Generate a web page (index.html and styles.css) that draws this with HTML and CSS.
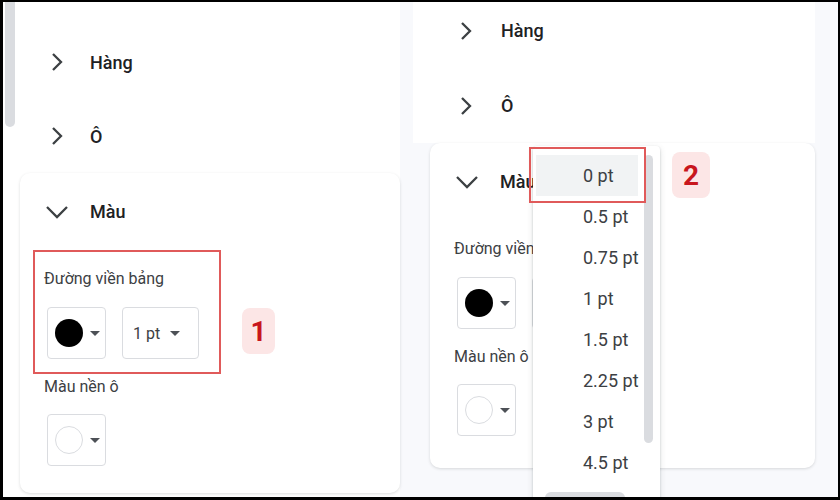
FILE: index.html
```html
<!DOCTYPE html>
<html lang="vi">
<head>
    <meta charset="UTF-8">
    <meta name="viewport" content="width=device-width, initial-scale=1.0">
    <title>Thuộc tính bảng</title>
    <link rel="stylesheet" href="styles.css">
</head>
<body>

<div class="frame">

    <!-- panel trái -->
    <div class="panel panel-left">
        <div class="scroll-thumb"></div>
        <div class="column">
            <div class="row">
                <svg class="chev" viewBox="0 0 24 24"><polyline points="8,4 16,12 8,20"/></svg>
                <span>Hàng</span>
            </div>
            <div class="row">
                <svg class="chev" viewBox="0 0 24 24"><polyline points="8,4 16,12 8,20"/></svg>
                <span>Ô</span>
            </div>

            <div class="card">
                <div class="card-head">
                    <svg class="chev" viewBox="0 0 24 24"><polyline points="2,7 12,17 22,7"/></svg>
                    <span>Màu</span>
                </div>
                <div class="annot-row">
                    <div class="field-box marked">
                        <div class="label">Đường viền bảng</div>
                        <div class="controls">
                            <div class="btn btn-color">
                                <span class="swatch"></span>
                                <svg class="caret" viewBox="0 0 10 5"><path d="M0 0h10L5 5z"/></svg>
                            </div>
                            <div class="btn btn-size">
                                <span>1 pt</span>
                                <svg class="caret" viewBox="0 0 10 5"><path d="M0 0h10L5 5z"/></svg>
                            </div>
                        </div>
                    </div>
                    <div class="badge">1</div>
                </div>
                <div class="label label-below">Màu nền ô</div>
                <div class="controls controls-below">
                    <div class="btn btn-color">
                        <span class="swatch swatch-white"></span>
                        <svg class="caret" viewBox="0 0 10 5"><path d="M0 0h10L5 5z"/></svg>
                    </div>
                </div>
            </div>
        </div>
    </div>

    <!-- panel phải -->
    <div class="panel panel-right">
        <div class="column">
            <div class="row">
                <svg class="chev" viewBox="0 0 24 24"><polyline points="8,4 16,12 8,20"/></svg>
                <span>Hàng</span>
            </div>
            <div class="row">
                <svg class="chev" viewBox="0 0 24 24"><polyline points="8,4 16,12 8,20"/></svg>
                <span>Ô</span>
            </div>

            <div class="card">
                <div class="card-head">
                    <svg class="chev" viewBox="0 0 24 24"><polyline points="2,7 12,17 22,7"/></svg>
                    <span>Màu</span>
                </div>
                <div class="annot-row">
                    <div class="field-box">
                        <div class="label">Đường viền bảng</div>
                        <div class="controls">
                            <div class="btn btn-color">
                                <span class="swatch"></span>
                                <svg class="caret" viewBox="0 0 10 5"><path d="M0 0h10L5 5z"/></svg>
                            </div>
                            <div class="btn btn-size">
                                <span>1 pt</span>
                                <svg class="caret" viewBox="0 0 10 5"><path d="M0 0h10L5 5z"/></svg>
                            </div>
                        </div>
                    </div>
                </div>
                <div class="label label-below">Màu nền ô</div>
                <div class="controls controls-below">
                    <div class="btn btn-color">
                        <span class="swatch swatch-white"></span>
                        <svg class="caret" viewBox="0 0 10 5"><path d="M0 0h10L5 5z"/></svg>
                    </div>
                </div>
            </div>
        </div>

        <div class="menu">
            <div class="menu-item active">0 pt</div>
            <div class="menu-item">0.5 pt</div>
            <div class="menu-item">0.75 pt</div>
            <div class="menu-item">1 pt</div>
            <div class="menu-item">1.5 pt</div>
            <div class="menu-item">2.25 pt</div>
            <div class="menu-item">3 pt</div>
            <div class="menu-item">4.5 pt</div>
            <div class="menu-scroll"></div>
            <div class="menu-next"></div>
        </div>
        <div class="mark-box"></div>
        <div class="badge badge-float">2</div>
    </div>

</div>

</body>
</html>
```

FILE: styles.css
```css
* {
    box-sizing: border-box;
}
body {
    margin: 0;
    background: #000;
    font-family: Roboto, "Noto Sans", Arial, sans-serif;
    color: #3c4043;
}
.frame {
    display: flex;
    width: 840px;
    height: 500px;
    padding: 2px 2px 3px 3px;
}
.panel {
    position: relative;
    overflow: hidden;
    background: #f8f9fc;
}
.panel-left {
    width: 410px;
}
.panel-right {
    width: 425px;
}
.scroll-thumb {
    position: absolute;
    left: 2px;
    top: 0;
    width: 10px;
    height: 125px;
    border-radius: 0 0 5px 5px;
    background: #dadce0;
}
.panel-left .column {
    width: 397px;
    height: 100%;
    padding-top: 23px;
    background: #fff;
}
.panel-right .column {
    width: 402px;
    margin-top: -9px;
}

.row {
    display: flex;
    align-items: center;
    gap: 21px;
    height: 74px;
    padding-left: 42px;
    background: #fff;
    font-size: 18px;
    font-weight: 500;
    color: #202124;
}
.panel-right .row {
    height: 75px;
    padding-left: 41px;
    gap: 23px;
}
.chev {
    width: 24px;
    height: 24px;
    flex-shrink: 0;
    fill: none;
    stroke: #3c4043;
    stroke-width: 2.3;
}

.card {
    width: 380px;
    margin-left: 17px;
    padding: 0 0 27px 24px;
    background: #fff;
    border-radius: 10px;
    box-shadow: 0 1px 3px rgba(60, 64, 67, 0.18);
}
.panel-right .card {
    width: 385px;
    padding-bottom: 32px;
}
.card-head {
    display: flex;
    align-items: center;
    gap: 21px;
    height: 77px;
    padding-left: 1px;
    font-size: 18px;
    font-weight: 500;
    color: #202124;
}
.annot-row {
    display: flex;
    align-items: flex-end;
    gap: 21px;
    margin-left: -11px;
}
.field-box {
    width: 188px;
    padding: 17px 0 13px 9px;
    border: 2px solid transparent;
}
.field-box.marked {
    border-color: #e05a5a;
}
.label {
    font-size: 16px;
    line-height: 20px;
    color: #3c4043;
}
.label-below {
    margin-top: 3px;
}
.controls {
    display: flex;
    gap: 16px;
    margin: 18px 0 0 3px;
}
.controls-below {
    margin-top: 17px;
}
.btn {
    display: flex;
    align-items: center;
    height: 52px;
    border: 1px solid #dadce0;
    border-radius: 4px;
    background: #fff;
}
.btn-color {
    width: 59px;
    padding-left: 7px;
    gap: 7px;
}
.btn-size {
    width: 77px;
    padding-left: 10px;
    gap: 10px;
    font-size: 16px;
    color: #3c4043;
}
.swatch {
    width: 28px;
    height: 28px;
    border-radius: 50%;
    background: #000;
}
.swatch-white {
    background: #fff;
    border: 1px solid #dadce0;
}
.caret {
    width: 10px;
    height: 5px;
    fill: #4d5156;
}

.badge {
    display: flex;
    align-items: center;
    justify-content: center;
    width: 33px;
    height: 46px;
    margin-bottom: 20px;
    border-radius: 8px;
    background: #fce6e6;
    color: #c8161d;
    font-size: 28px;
    font-weight: 700;
}
.badge-float {
    position: absolute;
    left: 259px;
    top: 150px;
    width: 38px;
    margin: 0;
}

.menu {
    position: absolute;
    left: 120px;
    top: 144px;
    width: 127px;
    height: 370px;
    padding-top: 9px;
    background: #fff;
    border-radius: 4px;
    box-shadow: 0 1px 2px rgba(60, 64, 67, 0.25), 0 2px 6px rgba(60, 64, 67, 0.15);
}
.menu-item {
    display: flex;
    align-items: center;
    height: 41px;
    margin: 0 22px 0 3px;
    padding-left: 47px;
    font-size: 18px;
    color: #3c4043;
    white-space: nowrap;
}
.menu-item.active {
    background: #f1f3f4;
}
.menu-scroll {
    position: absolute;
    left: 111px;
    top: 9px;
    width: 9px;
    height: 288px;
    border-radius: 5px;
    background: #dadce0;
}
.menu-next {
    position: absolute;
    left: 12px;
    top: 346px;
    width: 80px;
    height: 14px;
    border-radius: 6px;
    background: #dadce0;
}
.mark-box {
    position: absolute;
    left: 116px;
    top: 145px;
    width: 117px;
    height: 56px;
    border: 2px solid #e05a5a;
}
```
